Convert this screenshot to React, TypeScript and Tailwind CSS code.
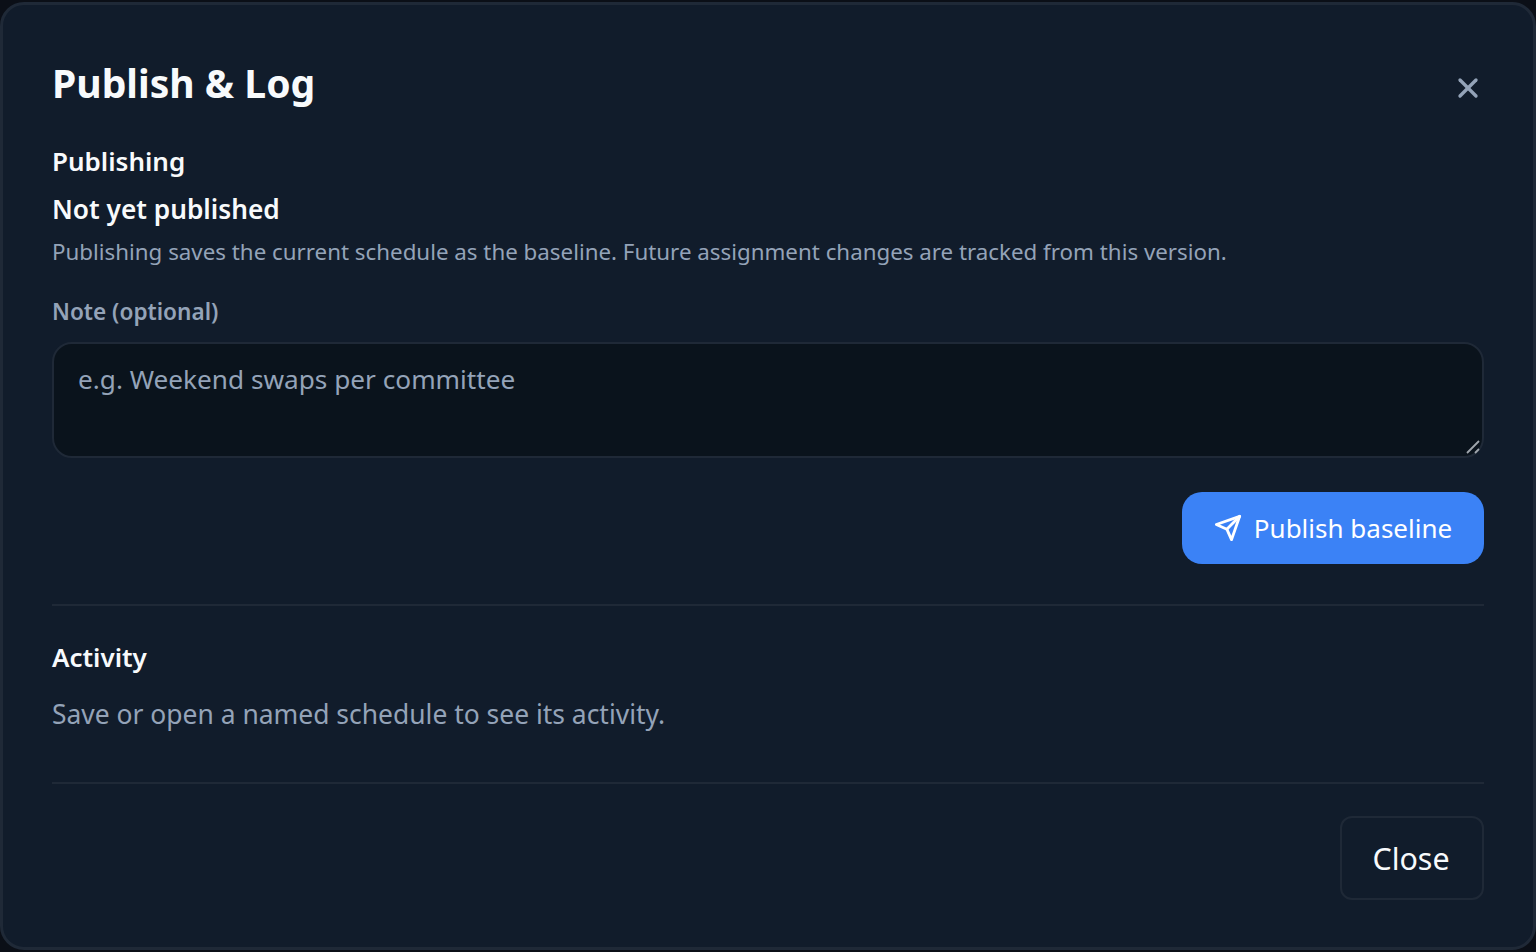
import { X } from "lucide-react";

export default function App() {
  return (
    <div className="h-[952px] w-[1536px] overflow-hidden bg-[#0b0f17] pt-[2px] font-['Noto_Sans',sans-serif]">
      <div className="flex h-[948px] w-[1536px] flex-col rounded-[24px] border-[3px] border-[#1f2937] bg-[#111c2b] px-[49px] text-[#f8fafc]">
        <div className="mt-[50px] flex h-[56px] items-start justify-between">
          <h1 className="text-[39.1px] leading-[56px] font-bold">Publish &amp; Log</h1>
          <button className="mt-[17px] mr-[0px] text-[#94a3b8]"><X size={32} strokeWidth={2.5} /></button>
        </div>
        <h2 className="mt-[30px] text-[26px] leading-[40px] font-semibold">Publishing</h2>
        <h3 className="mt-[8px] text-[26.25px] leading-[40px] font-semibold">Not yet published</h3>
        <p className="mt-[3px] text-[22.33px] leading-[40px] text-[#94a3b8]">Publishing saves the current schedule as the baseline. Future assignment changes are tracked from this version.</p>
        <label className="mt-[20px] text-[22.6px] leading-[40px] font-semibold text-[#94a3b8]">Note (optional)</label>
        <div className="relative mt-[10px] flex">
          <textarea readOnly placeholder="e.g. Weekend swaps per committee" className="h-[116px] w-full resize-none rounded-[20px] border-2 border-[#1f2937] bg-[#0a131c] px-[24px] py-[15px] text-[26.2px] leading-[40px] text-[#f8fafc] outline-none placeholder:text-[#94a3b8]" />
          <svg className="absolute right-[4px] bottom-[4px]" width="14" height="14" viewBox="0 0 14 14" fill="none" stroke="#a0a6ad" strokeWidth="1.8"><path d="M1 13 13 1M9 13l4-4" /></svg>
        </div>
        <div className="mt-[34px] flex justify-end">
          <button className="flex h-[72px] w-[302px] items-center justify-center gap-[12px] rounded-[20px] bg-[#3b82f6] text-[26px] text-white">
            <svg width="28" height="28" viewBox="0 0 24 24" fill="none" stroke="currentColor" strokeWidth="2.4" strokeLinecap="round" strokeLinejoin="round"><path d="m22 2-7 20-4-9-9-4Z" /><path d="M22 2 11 13" /></svg>
            Publish baseline
          </button>
        </div>
        <hr className="mt-[40px] border-t-2 border-[#1f2937]" />
        <h2 className="mt-[31px] text-[26px] leading-[40px] font-semibold">Activity</h2>
        <p className="mt-[17px] text-[26.45px] leading-[40px] text-[#94a3b8]">Save or open a named schedule to see its activity.</p>
        <hr className="mt-[48px] border-t-2 border-[#1f2937]" />
        <div className="mt-[32px] flex justify-end">
          <button className="h-[84px] w-[144px] rounded-[12px] border-2 border-[#1f2937] pt-[1px] pr-[2px] text-[30.4px] text-[#f8fafc]">Close</button>
        </div>
      </div>
    </div>
  );
}
